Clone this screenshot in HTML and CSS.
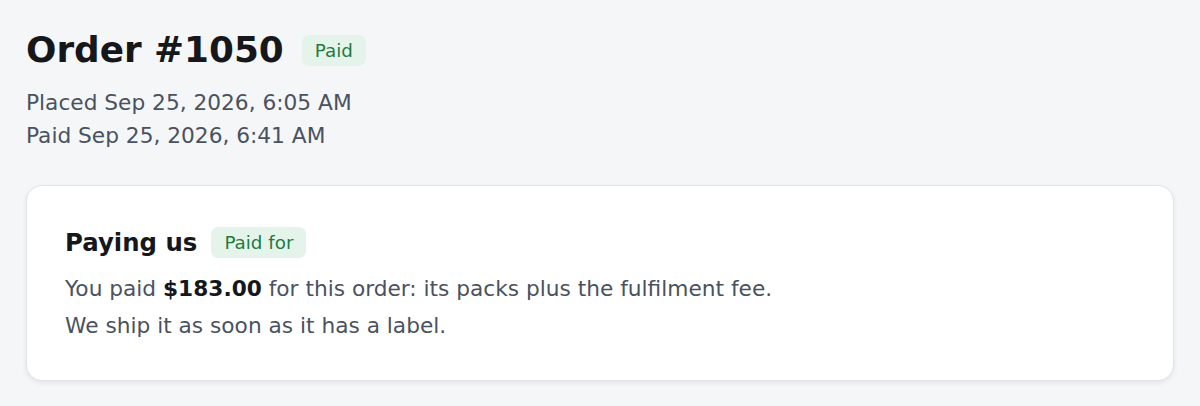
FILE: index.html
```html
<!DOCTYPE html>
<html lang="en">
<head>
<meta charset="utf-8">
<title>Order #1050</title>
<link rel="stylesheet" href="styles.css">
</head>
<body>
<main class="page">
  <header class="order-head">
    <div class="title-row">
      <h1 class="title">Order #1050</h1>
      <span class="badge">Paid</span>
    </div>
    <p class="meta">Placed Sep 25, 2026, 6:05 AM</p>
    <p class="meta">Paid Sep 25, 2026, 6:41 AM</p>
  </header>
  <section class="card">
    <div class="card-head">
      <h2 class="card-title">Paying us</h2>
      <span class="badge">Paid for</span>
    </div>
    <p class="card-text">You paid <strong>$183.00</strong> for this order: its packs plus the fulfilment fee.</p>
    <p class="card-text">We ship it as soon as it has a label.</p>
  </section>
</main>
</body>
</html>
```
FILE: styles.css
```css
* { box-sizing: border-box; }
html, body { margin: 0; padding: 0; }
body {
  background: #f5f6f8;
  font-family: "DejaVu Sans", Verdana, sans-serif;
  color: #15171a;
}
.page {
  padding: 29px 26px 28px;
}
.title-row {
  display: flex;
  align-items: center;
  gap: 18px;
  margin-bottom: 14px;
}
.title {
  margin: 0;
  font-size: 35.8px;
  font-weight: 700;
  line-height: 1.2;
}
.badge {
  display: inline-block;
  background: #e5f4ea;
  color: #1d7a44;
  font-size: 18.3px;
  line-height: 31px;
  padding: 0 13px;
  border-radius: 7px;
}
.meta {
  margin: 0;
  font-size: 21.7px;
  line-height: 33px;
  color: #4a5260;
}
.card {
  margin-top: 33px;
  background: #fff;
  border: 1px solid #e2e4e8;
  border-radius: 16px;
  box-shadow: 0 2px 5px rgba(20, 24, 40, 0.08);
  padding: 41px 38px 36px;
}
.card-head {
  display: flex;
  align-items: center;
  gap: 14px;
  margin-bottom: 12px;
}
.card-title {
  margin: 0;
  font-size: 24.4px;
  font-weight: 700;
  line-height: 1.2;
}
.card-text {
  margin: 0;
  font-size: 21.7px;
  line-height: 37px;
  color: #4a5260;
}
.card-text strong {
  color: #15171a;
  font-weight: 700;
}
```
